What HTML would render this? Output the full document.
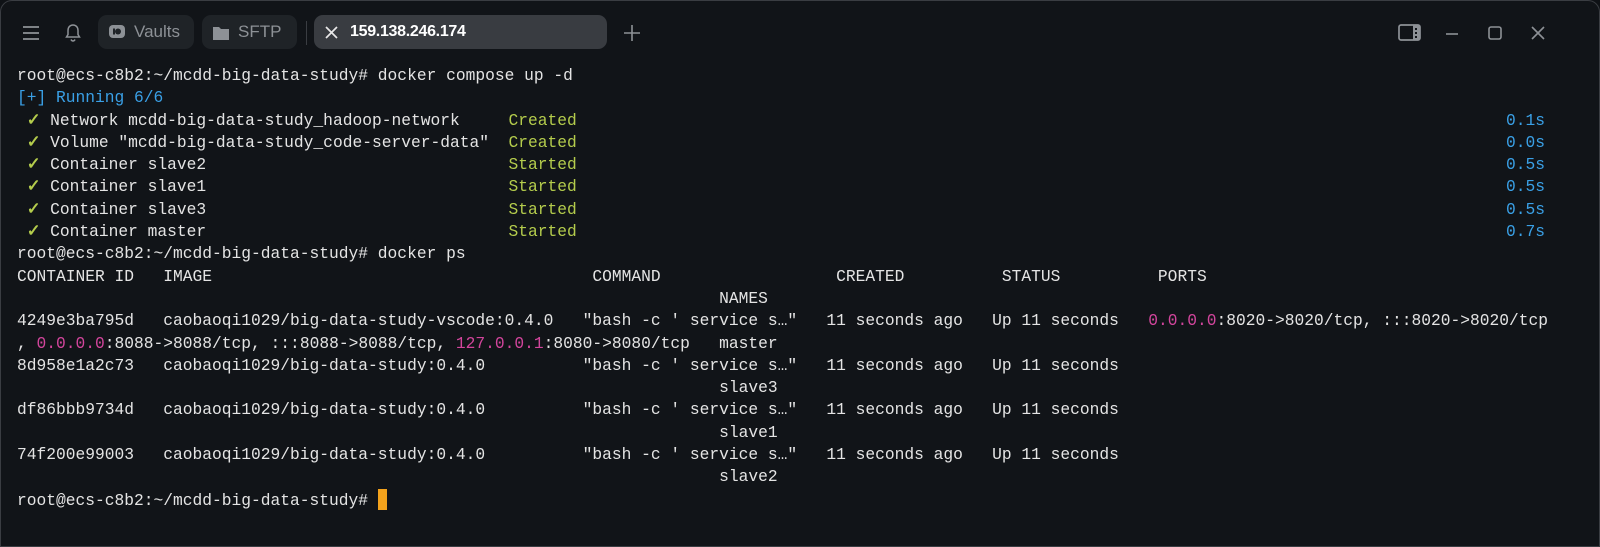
<!DOCTYPE html>
<html><head><meta charset="utf-8"><style>
html,body{margin:0;padding:0;background:#0f1216;}
body{width:1600px;height:541px;position:relative;overflow:hidden;}
.win{position:absolute;left:0;top:0;width:1598px;height:545px;border:1px solid #3a3d42;border-radius:12px 12px 0 0;background:#111418;}
.tab{position:absolute;top:14px;height:34px;border-radius:9px;background:#1f2327;color:#8d9196;font:16px "Liberation Sans",sans-serif;line-height:34px;}
pre{position:absolute;left:16px;top:64px;margin:0;font:16.25px/22.3px "Liberation Mono",monospace;color:#e4e4e4;white-space:pre;}
.b{color:#3aa0e6}.g{color:#b4cc4c}.m{color:#d2459c}
.t{position:absolute;left:1489px;color:#3aa0e6}
.ck{color:#b4cc4c;font-weight:bold}
.cur{display:inline-block;width:9px;height:21px;background:#f3a21c;vertical-align:-5px;}
svg{position:absolute}
</style></head><body><div class="win">
<svg style="left:20px;top:22px" width="20" height="20"><path d="M2 4h16M2 10h16M2 16h16" stroke="#8d9196" stroke-width="1.8"/></svg>
<svg style="left:63px;top:22px" width="18" height="20"><path d="M9 2c-3 0-5 2.3-5 5.5v4L2.5 14h13L14 11.5v-4C14 4.3 12 2 9 2zM7 16.5c.5 1 1.2 1.5 2 1.5s1.5-.5 2-1.5" fill="none" stroke="#8d9196" stroke-width="1.5"/></svg>
<div class="tab" style="left:97px;width:96px"><svg style="left:10px;top:9px" width="18" height="16"><rect x="1" y="1" width="16" height="13" rx="4" fill="#8d9196"/><circle cx="10" cy="7.5" r="3" fill="#1f2327"/><rect x="5" y="4.5" width="2" height="6" fill="#1f2327"/></svg><span style="position:absolute;left:36px;font-size:17px">Vaults</span></div>
<div class="tab" style="left:201px;width:95px"><svg style="left:11px;top:11px" width="16" height="14"><path d="M0 1h6l2 2h8v11H0z" fill="#8d9196"/></svg><span style="position:absolute;left:36px;font-size:17px">SFTP</span></div>
<div style="position:absolute;left:305px;top:20px;width:1px;height:24px;background:#3a3d42"></div>
<div class="tab" style="left:313px;width:293px;background:#393c41;color:#fff;font-weight:bold"><svg style="left:11px;top:11px" width="13" height="13"><path d="M1 1l11 11M12 1L1 12" stroke="#e8e8e8" stroke-width="1.7"/></svg><span style="position:absolute;left:36px;letter-spacing:-0.3px">159.138.246.174</span></div>
<svg style="left:622px;top:23px" width="18" height="18"><path d="M9 1v16M1 9h16" stroke="#8d9196" stroke-width="1.6"/></svg>
<svg style="left:1397px;top:23px" width="25" height="18"><rect x="1" y="1" width="21" height="15" rx="2" fill="none" stroke="#8d9196" stroke-width="1.7"/><rect x="15" y="1" width="7" height="15" fill="#8d9196"/><rect x="17" y="4" width="2" height="2" fill="#111418"/><rect x="17" y="8" width="2" height="2" fill="#111418"/><rect x="17" y="12" width="2" height="2" fill="#111418"/></svg>
<svg style="left:1444px;top:31px" width="14" height="4"><path d="M1 2h12" stroke="#8d9196" stroke-width="1.6"/></svg>
<svg style="left:1487px;top:25px" width="14" height="14"><rect x="1" y="1" width="12" height="12" rx="2" fill="none" stroke="#8d9196" stroke-width="1.6"/></svg>
<svg style="left:1530px;top:25px" width="14" height="14"><path d="M1 1l12 12M13 1L1 13" stroke="#8d9196" stroke-width="1.6"/></svg>
<pre>root@ecs-c8b2:~/mcdd-big-data-study# docker compose up -d
<span class="b">[+] Running 6/6</span>
 <span class="ck">✓</span> Network mcdd-big-data-study_hadoop-network     <span class="g">Created</span><span class="t">0.1s</span>
 <span class="ck">✓</span> Volume "mcdd-big-data-study_code-server-data"  <span class="g">Created</span><span class="t">0.0s</span>
 <span class="ck">✓</span> Container slave2                               <span class="g">Started</span><span class="t">0.5s</span>
 <span class="ck">✓</span> Container slave1                               <span class="g">Started</span><span class="t">0.5s</span>
 <span class="ck">✓</span> Container slave3                               <span class="g">Started</span><span class="t">0.5s</span>
 <span class="ck">✓</span> Container master                               <span class="g">Started</span><span class="t">0.7s</span>
root@ecs-c8b2:~/mcdd-big-data-study# docker ps
CONTAINER ID   IMAGE                                       COMMAND                  CREATED          STATUS          PORTS
                                                                        NAMES
4249e3ba795d   caobaoqi1029/big-data-study-vscode:0.4.0   "bash -c ' service s…"   11 seconds ago   Up 11 seconds   <span class="m">0.0.0.0</span>:8020->8020/tcp, :::8020->8020/tcp
, <span class="m">0.0.0.0</span>:8088->8088/tcp, :::8088->8088/tcp, <span class="m">127.0.0.1</span>:8080->8080/tcp   master
8d958e1a2c73   caobaoqi1029/big-data-study:0.4.0          "bash -c ' service s…"   11 seconds ago   Up 11 seconds
                                                                        slave3
df86bbb9734d   caobaoqi1029/big-data-study:0.4.0          "bash -c ' service s…"   11 seconds ago   Up 11 seconds
                                                                        slave1
74f200e99003   caobaoqi1029/big-data-study:0.4.0          "bash -c ' service s…"   11 seconds ago   Up 11 seconds
                                                                        slave2
root@ecs-c8b2:~/mcdd-big-data-study# <span class="cur"></span></pre>
</div></body></html>
